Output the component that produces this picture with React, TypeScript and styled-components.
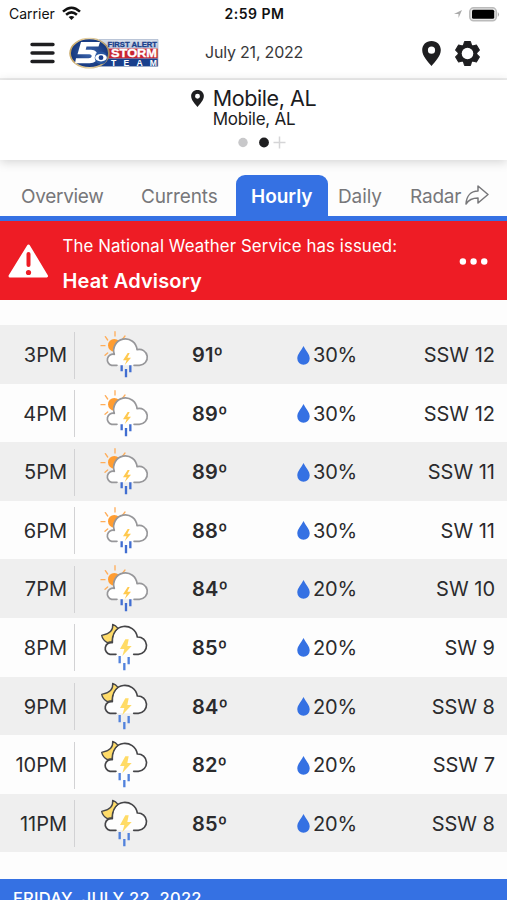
import React from "react";
import styled, { createGlobalStyle } from "styled-components";

const GlobalStyle = createGlobalStyle`
  * { box-sizing: border-box; }
  body { margin: 0; background: #fdfdfd; overflow: hidden; }
`;

const Screen = styled.main`
  width: 507px;
  height: 900px;
  overflow: hidden;
  background: #fdfdfd;
  color: #2b2b2d;
  font-family: Inter, "Liberation Sans", sans-serif;
  display: flex;
  flex-direction: column;
`;

const Label = styled.span<{ $size: number; $weight?: number; $spacing?: number; $color?: string }>`
  font-size: ${(p) => p.$size}px;
  font-weight: ${(p) => p.$weight ?? 400};
  letter-spacing: ${(p) => p.$spacing ?? 0}px;
  color: ${(p) => p.$color ?? "inherit"};
  line-height: 1.2;
  white-space: nowrap;
`;

const StatusBar = styled.div`
  flex: none;
  height: 27px;
  display: grid;
  grid-template-columns: 1fr auto 1fr;
  align-items: center;
  padding: 1px 7px 0 9px;
  color: #111;
  background: #fff;
`;

const StatusSide = styled.div<{ $end?: boolean }>`
  display: flex;
  align-items: center;
  justify-content: ${(p) => (p.$end ? "flex-end" : "flex-start")};
  gap: 7px;
`;

const Header = styled.header`
  flex: none;
  height: 53px;
  display: grid;
  grid-template-columns: 40px 136px 1fr 32px 27px;
  align-items: center;
  padding: 1px 26px 0 29px;
  background: #fff;
  border-bottom: 2px solid #eeeeee;
  svg { display: block; }
`;

const Place = styled.section`
  flex: none;
  height: 80px;
  background: #fff;
  box-shadow: 0 2px 10px rgba(0, 0, 0, 0.17);
  display: flex;
  flex-direction: column;
  align-items: center;
  padding-top: 6px;
`;

const PlaceName = styled.div`
  display: flex;
  align-items: center;
  gap: 9px;
  height: 25px;
  color: #1c1c1e;
`;

const PlaceSub = styled.div`
  height: 17px;
  display: flex;
  align-items: center;
  padding-left: 1px;
  color: #1c1c1e;
  line-height: 1;
`;

const Pager = styled.div`
  display: flex;
  align-items: center;
  margin-top: 8px;
  padding-left: 18px;
`;

const Tabs = styled.nav`
  flex: none;
  height: 61px;
  display: flex;
  align-items: flex-end;
  border-bottom: 5px solid #3571e3;
  padding: 0 16px 0 21px;
`;

const Tab = styled.div<{ $width: number; $active?: boolean; $inset?: number }>`
  width: ${(p) => p.$width}px;
  height: 41px;
  display: flex;
  align-items: center;
  gap: 4px;
  color: ${(p) => (p.$active ? "#fff" : "#77777a")};
  background: ${(p) => (p.$active ? "#3571e3" : "transparent")};
  padding: 3px 0 0 ${(p) => p.$inset ?? 0}px;
  border-radius: 9px 9px 0 0;
`;

const TabIcon = styled.svg`
  flex: none;
  margin-top: -4px;
`;

const Alert = styled.section`
  flex: none;
  height: 79px;
  display: grid;
  grid-template-columns: 54.5px 1fr 32px;
  align-items: center;
  padding: 0 17px 0 8px;
  background: #ee1c25;
  color: #fff;
`;

const AlertText = styled.div`
  display: flex;
  flex-direction: column;
  gap: 13px;
  padding-top: 8px;
`;

const Hours = styled.section`
  flex: none;
  margin-top: 25px;
  display: grid;
  grid-template-rows: repeat(9, 58.6px);
`;

const Row = styled.div`
  display: grid;
  grid-template-columns: 67px 23px 102px 105px 1fr auto;
  align-items: center;
  padding-right: 12px;
  &:nth-child(odd) { background: #efefef; }
`;

const Hour = styled.div`
  text-align: right;
`;

const Divider = styled.div`
  width: 1px;
  height: 47px;
  margin-left: 7px;
  background: #d2d2d4;
`;

const Rain = styled.div`
  display: flex;
  align-items: center;
  gap: 3px;
`;

const DayBar = styled.div`
  flex: none;
  height: 60px;
  margin-top: 26.6px;
  background: #3571e3;
  padding: 9px 0 0 13px;
  color: #fff;
`;

function Wifi() {
  return (
    <svg width="19" height="15" viewBox="0 0 19 15" fill="none" stroke="#111" strokeWidth="2.5">
      <path d="M1 5.6Q9.5-2.2 18 5.6" />
      <path d="M4.1 8.8Q9.5 3.9 14.9 8.8" />
      <path d="M6.6 11.1Q9.5 8.7 12.4 11.1L9.5 14Z" fill="#111" stroke="none" />
    </svg>
  );
}

function Battery() {
  return (
    <svg width="31" height="15" viewBox="0 0 31 15">
      <rect x=".8" y=".8" width="26.5" height="13" rx="3.8" fill="#e6e6e6" stroke="#bbb" strokeWidth="1.5" />
      <rect x="3" y="2.8" width="22.2" height="9" rx="1.5" />
      <path d="M28.800 5q2.400 2.500 0 5z" fill="#aaa" />
    </svg>
  );
}

function Pin({ width, height }: { width: number; height: number }) {
  return (
    <svg width={width} height={height} viewBox="0 0 19 25" preserveAspectRatio="none">
      <path
        fillRule="evenodd"
        fill="#1e1e20"
        d="M9.5 0C4 0 .2 3.9.2 9c0 6 5.500 11.500 9.300 16C13.300 20.500 18.800 15 18.800 9 18.800 3.900 15 0 9.500 0zm0 5.600a3.600 3.600 0 1 1 0 7.200 3.600 3.600 0 0 1 0-7.200z"
      />
    </svg>
  );
}

function Gear() {
  return (
    <svg width="27" height="27" viewBox="0 0 27 27">
      <g fill="#1e1e20">
        {[0, 60, 120].map((a) => (
          <path
            key={a}
            transform={`rotate(${a} 13.5 13.5)`}
            d="M10.500 1.500h6l1.200 4.500v15l-1.200 4.500h-6l-1.200-4.500V6z"
            strokeLinejoin="round"
            stroke="#1e1e20"
          />
        ))}
        <circle cx="13.5" cy="13.5" r="9.7" />
      </g>
      <circle cx="13.5" cy="13.5" r="5.8" fill="#fff" />
    </svg>
  );
}

function Logo() {
  return (
    <svg width="90" height="32" viewBox="0 0 90 32">
      <defs>
        <linearGradient id="silver" x2="0" y2="1">
          <stop stopColor="#d9dfea" />
          <stop offset="1" stopColor="#b7c4dc" />
        </linearGradient>
        <linearGradient id="gold">
          <stop stopColor="#c5a35f" />
          <stop offset=".5" stopColor="#ead7ab" />
          <stop offset="1" stopColor="#a8905f" />
        </linearGradient>
        <radialGradient id="navy">
          <stop stopColor="#3c66ad" />
          <stop offset="1" stopColor="#14357c" />
        </radialGradient>
      </defs>
      <path d="M30 2.500h59v9H30z" fill="url(#silver)" />
      <path d="M36 11.500h53v10H36z" fill="#c92632" />
      <path d="M30 21.500h59v8H30z" fill="#183f8c" />
      <path d="M30 2.500h59v27H30" fill="none" stroke="#a5b3ca" strokeWidth=".7" />
      <g fontFamily="Liberation Sans, sans-serif" fontWeight="700">
        <text x="38.5" y="9.7" fontSize="7.8" textLength="49.5" lengthAdjust="spacingAndGlyphs" fill="#193f8b" stroke="#193f8b" strokeWidth=".3">FIRST ALERT</text>
        <text x="42" y="20.2" fontSize="11" textLength="46" lengthAdjust="spacingAndGlyphs" fill="#fff" stroke="#fff" strokeWidth=".35">STORM</text>
        <text x="42" y="28.5" fontSize="8.6" textLength="46" fill="#fff">TEAM</text>
      </g>
      <ellipse cx="20.5" cy="16.2" rx="19.4" ry="14.7" fill="url(#navy)" stroke="url(#gold)" strokeWidth="1.7" />
      <path
        d="M12 5h19l-1.500 4.600H17.500l-.8 3.200H22c9 0 9.500 13.500-1.500 13.500H6L7 21.200h12.500c4 0 4.200-4 .8-4H8.500z"
        fill="#fff"
      />
      <circle cx="32" cy="20.7" r="6.3" fill="#2856a0" />
      <ellipse cx="32" cy="20.7" rx="5.8" ry="3.7" fill="#fff" />
      <circle cx="32" cy="20.7" r="2.4" fill="#183f8c" />
    </svg>
  );
}

function NightStorm() {
  return (
    <>
      <path
        d="M78 109H60A17.500 17.500 0 0 1 67 74C63 12 134 12 142 57A26 26 0 1 1 145 109H131"
        fill="#fefefe"
        stroke="#454548"
        strokeWidth="5"
      />
      <path d="M68 19Q71 46 35 52Q38 66 52 74Q61 71 66 71Q67 44 84 31Q77 22 68 19Z" fill="#ffdc69" stroke="#47474a" strokeWidth="4" />
      <path d="M106 64L90 93H103L97 114L125 84H112L116 64Z" fill="#ffdb66" />
      <path d="M89 114v22M116 117v22M103 135v22" stroke="#5282dc" strokeWidth="7" strokeLinecap="butt" />
    </>
  );
}

function DayStorm() {
  return (
    <>
      <circle cx="73" cy="61" r="19" fill="#ff9d32" />
      <path d="M75 20v13M46 35l7 10M105 33l-8 10M33 62h12M45 91l8-7" stroke="#ffae5b" strokeWidth="4" />
      <path
        d="M81 121H65A16 16 0 0 1 73 88A35 35 0 1 1 141 74A24 24 0 1 1 148 121H132"
        fill="#fff"
        stroke="#97979a"
        strokeWidth="5"
      />
      <path d="M113 84L99 106H110L104 121L123 98H112L119 84Z" fill="#ffc94f" />
      <path d="M95 121v18M121 121v21M108 132v25" stroke="#416ed1" strokeWidth="7" strokeLinecap="butt" />
    </>
  );
}

function WeatherIcon({ night }: { night: boolean }) {
  return (
    <svg width="70" height="60" viewBox="0 0 210 180" fill="none" strokeLinecap="round" strokeLinejoin="round">
      {night ? <NightStorm /> : <DayStorm />}
    </svg>
  );
}

const forecast = [
  ["3PM", "91º", "30%", "SSW 12"],
  ["4PM", "89º", "30%", "SSW 12"],
  ["5PM", "89º", "30%", "SSW 11"],
  ["6PM", "88º", "30%", "SW 11"],
  ["7PM", "84º", "20%", "SW 10"],
  ["8PM", "85º", "20%", "SW 9"],
  ["9PM", "84º", "20%", "SSW 8"],
  ["10PM", "82º", "20%", "SSW 7"],
  ["11PM", "85º", "20%", "SSW 8"],
];

export default function App() {
  return (
    <>
      <GlobalStyle />
      <Screen>
        <StatusBar>
          <StatusSide>
            <Label $size={14}>Carrier</Label>
            <Wifi />
          </StatusSide>
          <Label $size={14} $weight={600} $spacing={0.5}>2:59 PM</Label>
          <StatusSide $end>
            <svg width="8" height="8" viewBox="0 0 8 8"><path d="M0 4L8 0 4.500 8V4z" fill="#aaa" /></svg>
            <Battery />
          </StatusSide>
        </StatusBar>
        <Header>
          <svg width="27" height="22" viewBox="0 0 27 22" stroke="#1e1e20" strokeWidth="3.4" strokeLinecap="round">
            <path d="M3 2.500h21M3 11h21M3 19.500h21" />
          </svg>
          <Logo />
          <Label $size={16} $spacing={-0.2} $color="#38383a">July 21, 2022</Label>
          <Pin width={19} height={25} />
          <Gear />
        </Header>
        <Place>
          <PlaceName>
            <Pin width={13} height={17} />
            <Label $size={21.5} $spacing={-0.4}>Mobile, AL</Label>
          </PlaceName>
          <PlaceSub>
            <Label $size={17} $spacing={-0.25}>Mobile, AL</Label>
          </PlaceSub>
          <Pager>
            <svg width="49" height="13" viewBox="0 0 49 13">
              <circle cx="5" cy="6.5" r="4.7" fill="#c8c8ca" />
              <circle cx="26" cy="6.5" r="4.9" fill="#1e1e20" />
              <path d="M35.500 6.500h12M41.500.5v12" stroke="#d5d5d7" strokeWidth="1.5" />
            </svg>
          </Pager>
        </Place>
        <Tabs>
          <Tab $width={120}><Label $size={19} $spacing={-0.3}>Overview</Label></Tab>
          <Tab $width={95}><Label $size={19} $spacing={-0.15}>Currents</Label></Tab>
          <Tab $width={92} $active $inset={15}><Label $size={19} $weight={600}>Hourly</Label></Tab>
          <Tab $width={82} $inset={10}><Label $size={19} $spacing={-0.1}>Daily</Label></Tab>
          <Tab $width={81}>
            <Label $size={19} $spacing={-0.2}>Radar</Label>
            <TabIcon width="24" height="21" viewBox="0 0 24 21" fill="none" stroke="#77777a" strokeWidth="1.5" strokeLinejoin="round">
              <path d="M13 1L23 9.500 13 18V13C7 13 3.500 15 1 19C1.500 11 6 6 13 6Z" />
            </TabIcon>
          </Tab>
        </Tabs>
        <Alert>
          <svg width="41" height="36" viewBox="0 0 41 36">
            <path d="M20.500 3L38.500 33H2Z" fill="#fff" stroke="#fff" strokeWidth="3" strokeLinejoin="round" />
            <path d="M20.500 11v11" stroke="#ee1c25" strokeWidth="4" strokeLinecap="round" />
            <circle cx="20.5" cy="29.5" r="2.6" fill="#ee1c25" />
          </svg>
          <AlertText>
            <Label $size={16.8} $spacing={0.1}>The National Weather Service has issued:</Label>
            <Label $size={20} $weight={600} $spacing={0.15}>Heat Advisory</Label>
          </AlertText>
          <svg width="32" height="8" viewBox="0 0 32 9" fill="#fff">
            <circle cx="3.5" cy="5" r="3.6" /><circle cx="15.5" cy="5" r="3.6" /><circle cx="27.5" cy="5" r="3.6" />
          </svg>
        </Alert>
        <Hours>
          {forecast.map(([time, temp, rain, wind], i) => (
            <Row key={time}>
              <Hour><Label $size={20}>{time}</Label></Hour>
              <Divider />
              <WeatherIcon night={i >= 5} />
              <Label $size={20} $weight={600} $spacing={0.15}>{temp}</Label>
              <Rain>
                <svg width="13" height="19" viewBox="0 0 13 19">
                  <path d="M6.500 0C4 5 .3 8 .3 12.500a6.200 6.200 0 0 0 12.400 0C12.700 8 9 5 6.500 0z" fill="#3571e3" />
                </svg>
                <Label $size={20} $spacing={-0.2}>{rain}</Label>
              </Rain>
              <Label $size={20}>{wind}</Label>
            </Row>
          ))}
        </Hours>
        <DayBar>
          <Label $size={16.5} $weight={500} $spacing={0.25}>FRIDAY, JULY 22, 2022</Label>
        </DayBar>
      </Screen>
    </>
  );
}
